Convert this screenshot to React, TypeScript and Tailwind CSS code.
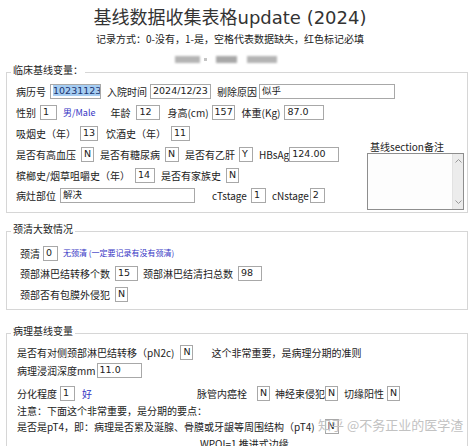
import type { ReactNode } from "react"

function T({ c = "", children }: { c?: string; children: ReactNode }) {
  return <span className={`shrink-0 whitespace-nowrap ${c}`}>{children}</span>
}

// input box
function B({ c = "", children }: { c?: string; children?: ReactNode }) {
  return (
    <span
      className={`shrink-0 box-border h-[15px] overflow-hidden whitespace-nowrap border border-[#a8a8a8] bg-white pl-[2px] font-['DejaVu_Sans','Noto_Sans_CJK_SC',sans-serif] text-[9.5px] leading-[12px] text-[#1a1a1a] ${c}`}
    >
      {children}
    </span>
  )
}

function Row({ c = "", children }: { c?: string; children: ReactNode }) {
  return <div className={`flex items-center ${c}`}>{children}</div>
}

function Legend({ children }: { children: ReactNode }) {
  return (
    <legend className="ml-[4px] px-[2px] text-[10px] leading-[14px]">
      <span className="relative -top-[2px]">{children}</span>
    </legend>
  )
}

function Blue({ c = "", children }: { c?: string; children: ReactNode }) {
  return <span className={`shrink-0 whitespace-nowrap text-[#3434c4] ${c}`}>{children}</span>
}

export default function App() {
  return (
    <div className="relative h-[446px] w-[474px] overflow-hidden bg-white font-['Noto_Sans_CJK_SC',sans-serif] text-[10px] text-[#222]">
      {/* header */}
      <div className="pr-[14px] pt-[5px] text-center">
        <div className="text-[18px] leading-[22px] text-[#333]">
          基线数据收集表格<span className="font-['DejaVu_Sans',sans-serif]">update (2024)</span>
        </div>
        <div className="mt-[3px] text-[10px] leading-[14px]">
          记录方式：0-没有，1-是，空格代表数据缺失，红色标记必填
        </div>
      </div>
      <div className="mt-[7px] flex h-[12px] items-center">
        <span className="ml-[175px] h-[7px] w-[25px] bg-[#b4b4b4] blur-[1px]" />
        <span className="ml-[4px] h-[3px] w-[3px] bg-[#c4c4c4] blur-[0.5px]" />
        <span className="ml-[9px] h-[7px] w-[21px] bg-[#a8a8a8] blur-[1px]" />
        <span className="ml-[10px] h-[7px] w-[30px] bg-[#b4b4b4] blur-[1px]" />
      </div>

      {/* 临床基线变量 */}
      <fieldset className="mx-[6px] border border-[#d6d6d6] pb-[2px]">
        <Legend>临床基线变量：</Legend>
        <div className="pl-[9px] pt-[2px]">
          <Row c="h-[21px]">
            <T>病历号</T>
            <B c="ml-[4px] w-[51px] pl-[0px]">
              <span className="bg-[#a6cdf2] text-[#1b3570]">10231123</span>
            </B>
            <T c="ml-[6px]">入院时间</T>
            <B c="ml-[3px] w-[61px]">2024/12/23</B>
            <T c="ml-[6px]">剔除原因</T>
            <B c="ml-[2px] w-[136px]">似乎</B>
          </Row>
          <Row c="h-[21px]">
            <T>性别</T>
            <B c="ml-[4px] w-[17px]">1</B>
            <Blue c="ml-[6px] text-[9px]">男/Male</Blue>
            <T c="ml-[15px]">年龄</T>
            <B c="ml-[6px] w-[24px]">12</B>
            <T c="ml-[7px]">身高(cm)</T>
            <B c="ml-[3px] w-[23px]">157</B>
            <T c="ml-[7px]">体重(Kg)</T>
            <B c="ml-[4px] w-[40px]">87.0</B>
          </Row>
          <Row c="h-[21px]">
            <T>吸烟史（年）</T>
            <B c="ml-[4px] w-[18px]">13</B>
            <T c="ml-[8px]">饮酒史（年）</T>
            <B c="ml-[5px] w-[19px]">11</B>
          </Row>
          <div className="flex items-start">
            <div className="w-[351px] shrink-0">
              <Row c="h-[21px]">
                <T>是否有高血压</T>
                <B c="ml-[5px] w-[13px]">N</B>
                <T c="ml-[6px]">是否有糖尿病</T>
                <B c="ml-[5px] w-[14px]">N</B>
                <T c="ml-[6px]">是否有乙肝</T>
                <B c="ml-[4px] w-[14px]">Y</B>
                <T c="ml-[6px]">HBsAg</T>
                <B c="ml-[0px] w-[50px]">124.00</B>
              </Row>
              <Row c="h-[21px]">
                <T>槟榔史/烟草咀嚼史（年）</T>
                <B c="ml-[5px] w-[20px]">14</B>
                <T c="ml-[6px]">是否有家族史</T>
                <B c="ml-[5px] w-[13px]">N</B>
              </Row>
              <Row c="h-[18px]">
                <T>病灶部位</T>
                <B c="ml-[4px] w-[135px]">解决</B>
                <T c="ml-[17px]">cTstage</T>
                <B c="ml-[4px] w-[15px]">1</B>
                <T c="ml-[6px]">cNstage</T>
                <B c="ml-[1px] w-[15px]">2</B>
              </Row>
            </div>
            {/* 备注 textarea */}
            <div className="-mt-[3px] w-[97px] shrink-0">
              <div className="ml-[3px] h-[12px] whitespace-nowrap leading-[12px]">基线section备注</div>
              <div className="box-border flex h-[57px] w-[97px] justify-end border border-[#8e8e8e] bg-[#fdfdfd]">
                <div className="flex w-[11px] flex-col items-center justify-between border-l border-[#e2e2e2] bg-[#ececec] py-[5px]">
                  <svg width="7" height="4" viewBox="0 0 7 4">
                    <path d="M0.5 3.5 L3.5 0.5 L6.5 3.5" stroke="#9a9a9a" fill="none" />
                  </svg>
                  <svg width="7" height="4" viewBox="0 0 7 4">
                    <path d="M0.5 0.5 L3.5 3.5 L6.5 0.5" stroke="#9a9a9a" fill="none" />
                  </svg>
                </div>
              </div>
            </div>
          </div>
        </div>
      </fieldset>

      {/* 颈清大致情况 */}
      <fieldset className="mx-[6px] mt-[11px] border border-[#d6d6d6] pb-[5px]">
        <Legend>颈清大致情况</Legend>
        <div className="pl-[13px] pt-[5px]">
          <Row c="h-[20px]">
            <T>颈清</T>
            <B c="ml-[3px] w-[15px]">0</B>
            <Blue c="ml-[5px] text-[8px]">无颈清 (一定要记录有没有颈清)</Blue>
          </Row>
          <Row c="h-[21px]">
            <T>颈部淋巴结转移个数</T>
            <B c="ml-[5px] w-[23px]">15</B>
            <T c="ml-[5px]">颈部淋巴结清扫总数</T>
            <B c="ml-[5px] w-[24px]">98</B>
          </Row>
          <Row c="h-[20px]">
            <T>颈部否有包膜外侵犯</T>
            <B c="ml-[5px] w-[13px]">N</B>
          </Row>
        </div>
      </fieldset>

      {/* 病理基线变量 */}
      <fieldset className="mx-[6px] mt-[16px] border border-[#d6d6d6] pb-[6px]">
        <Legend>病理基线变量</Legend>
        <div className="pl-[10px] pt-[3px]">
          <Row c="h-[18px]">
            <T>是否有对侧颈部淋巴结转移（pN2c)</T>
            <B c="ml-[6px] w-[13px]">N</B>
            <T c="ml-[18px]">这个非常重要，是病理分期的准则</T>
          </Row>
          <Row c="h-[19px]">
            <T>病理浸润深度mm</T>
            <B c="ml-[1px] w-[45px]">11.0</B>
          </Row>
          <Row c="mt-[4px] h-[18px]">
            <T>分化程度</T>
            <B c="ml-[3px] w-[15px]">1</B>
            <Blue c="ml-[7px]">好</Blue>
            <T c="ml-[105px]">脉管内癌栓</T>
            <B c="ml-[10px] w-[13px]">N</B>
            <T c="ml-[5px]">神经束侵犯</T>
            <B c="ml-[0px] w-[13px]">N</B>
            <T c="ml-[6px]">切缘阳性</T>
            <B c="ml-[3px] w-[13px]">N</B>
          </Row>
          <Row c="h-[16px]">
            <T>注意：下面这个非常重要，是分期的要点：</T>
          </Row>
          <Row c="h-[17px]">
            <T>是否是pT4，即：病理是否累及涎腺、骨膜或牙龈等周围结构（pT4)</T>
            <B c="ml-[10px] w-[14px]">N</B>
          </Row>
          <Row c="h-[17px]">
            <T c="ml-[183px]">WPOI=1 推进式边缘</T>
          </Row>
        </div>
      </fieldset>

      {/* watermark */}
      <div className="absolute left-[318px] top-[417px] whitespace-nowrap text-[13px] leading-[16px] text-[#c2c2c2]">
        知乎 @不务正业的医学渣
      </div>
    </div>
  )
}
